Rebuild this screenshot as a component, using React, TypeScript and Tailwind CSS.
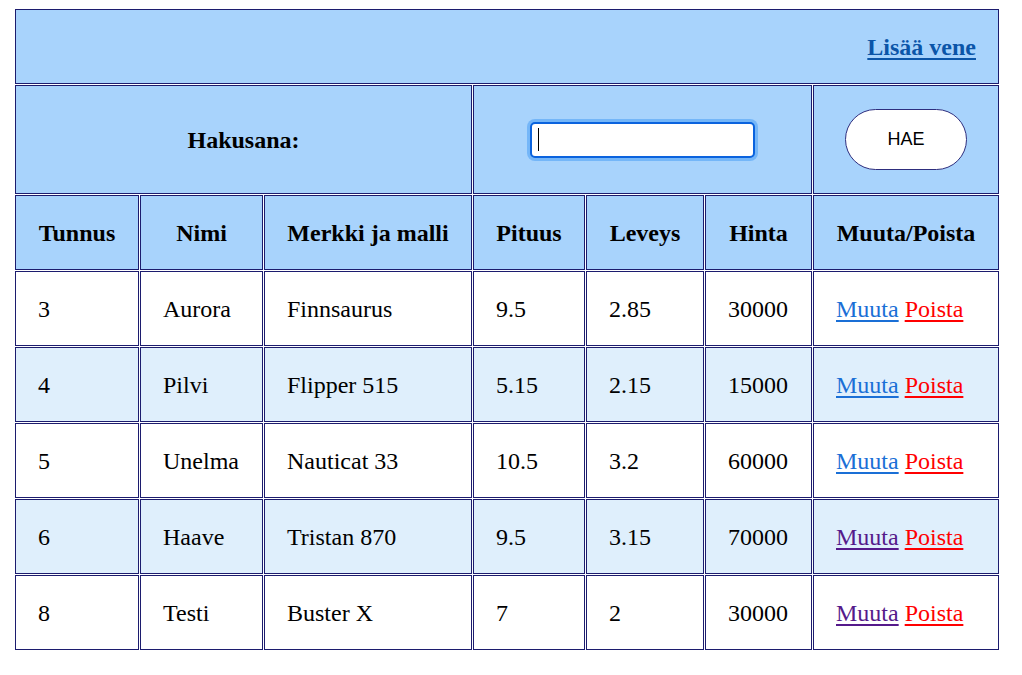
import React from "react";

const rows = [
  { id: "3", nimi: "Aurora", malli: "Finnsaurus", pituus: "9.5", leveys: "2.85", hinta: "30000", visited: false },
  { id: "4", nimi: "Pilvi", malli: "Flipper 515", pituus: "5.15", leveys: "2.15", hinta: "15000", visited: false },
  { id: "5", nimi: "Unelma", malli: "Nauticat 33", pituus: "10.5", leveys: "3.2", hinta: "60000", visited: false },
  { id: "6", nimi: "Haave", malli: "Tristan 870", pituus: "9.5", leveys: "3.15", hinta: "70000", visited: true },
  { id: "8", nimi: "Testi", malli: "Buster X", pituus: "7", leveys: "2", hinta: "30000", visited: true },
];

const headers = ["Tunnus", "Nimi", "Merkki ja malli", "Pituus", "Leveys", "Hinta", "Muuta/Poista"];

export default function App() {
  const cell = "border border-[#1c1c6e] flex items-center";
  return (
    <div
      className="min-h-screen bg-white text-black"
      style={{ fontFamily: '"Liberation Serif", "Times New Roman", serif' }}
    >
      <div className="pl-[15px] pt-[9px]">
        <div className="grid w-[984px] grid-cols-[124px_123px_208px_112px_118px_107px_186px] grid-rows-[75px_109px_75px_75px_75px_75px_75px_75px] gap-px text-[24px]">
          {/* top row */}
          <div className={`${cell} col-span-7 justify-end bg-[#a8d3fc] pr-[22px]`}>
            <a href="#" className="font-bold text-[#0b55a8] underline decoration-[2px] underline-offset-[3px]">
              Lisää vene
            </a>
          </div>
          {/* search row */}
          <div className={`${cell} col-span-3 justify-center bg-[#a8d3fc] font-bold`}>Hakusana:</div>
          <div className={`${cell} col-span-3 justify-center bg-[#a8d3fc]`}>
            <div className="relative h-[36px] w-[225px] rounded-[5px] border-2 border-[#0a63de] bg-white shadow-[0_0_0_3px_#74b6f8]">
              <div className="absolute left-[6px] top-[4px] h-[23px] w-px bg-black" />
            </div>
          </div>
          <div className={`${cell} justify-center bg-[#a8d3fc]`}>
            <button
              className="h-[61px] w-[122px] rounded-full border border-[#2e2e7e] bg-white text-[18px] text-black"
              style={{ fontFamily: '"Liberation Sans", Arial, sans-serif' }}
            >
              HAE
            </button>
          </div>
          {/* header row */}
          {headers.map((h) => (
            <div key={h} className={`${cell} justify-center bg-[#a8d3fc] font-bold`}>
              {h}
            </div>
          ))}
          {/* data rows */}
          {rows.map((r, i) => {
            const bg = i % 2 === 1 ? "bg-[#dfeffc]" : "bg-white";
            return (
              <React.Fragment key={r.id}>
                <div className={`${cell} ${bg} pl-[22px]`}>{r.id}</div>
                <div className={`${cell} ${bg} pl-[22px]`}>{r.nimi}</div>
                <div className={`${cell} ${bg} pl-[22px]`}>{r.malli}</div>
                <div className={`${cell} ${bg} pl-[22px]`}>{r.pituus}</div>
                <div className={`${cell} ${bg} pl-[22px]`}>{r.leveys}</div>
                <div className={`${cell} ${bg} pl-[22px]`}>{r.hinta}</div>
                <div className={`${cell} ${bg} pl-[22px]`}>
                  <span>
                    <a
                      href="#"
                      className={`underline underline-offset-[3px] ${r.visited ? "text-[#551a8b]" : "text-[#1a6fd6]"}`}
                    >
                      Muuta
                    </a>{" "}
                    <a href="#" className="text-[#ff0000] underline underline-offset-[3px]">
                      Poista
                    </a>
                  </span>
                </div>
              </React.Fragment>
            );
          })}
        </div>
      </div>
    </div>
  );
}
